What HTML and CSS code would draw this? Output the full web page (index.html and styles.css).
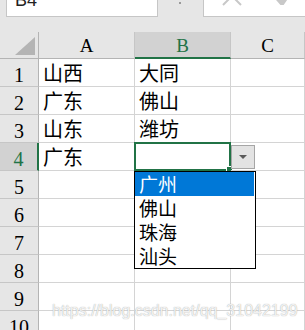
FILE: index.html
```html
<!DOCTYPE html>
<html lang="zh-CN">
  <head>
    <meta charset="UTF-8" />
    <meta name="viewport" content="width=device-width, initial-scale=1.0" />
    <title>Excel 下拉列表</title>
    <link rel="stylesheet" href="styles.css">
  </head>
  <body>
    <div class="app">
      <div class="formula-bar">
        <div class="name-box">B4</div>
        <span class="dots"></span>
        <div class="fx-box">
          <svg class="icon-x" width="20" height="20" viewBox="0 0 20 20">
            <path d="M1 1 L19 19 M19 1 L1 19" stroke="#c8c8c8" stroke-width="2" fill="none" />
          </svg>
          <svg class="icon-ok" width="20" height="20" viewBox="0 0 20 20">
            <path d="M1 10 L8 18 L19 2" stroke="#c8c8c8" stroke-width="5" fill="none" />
          </svg>
        </div>
      </div>

      <div class="sheet">
        <div class="corner"><span class="corner-tri"></span></div>
        <div class="col-head">A</div>
        <div class="col-head selected">B</div>
        <div class="col-head">C</div>

        <div class="row-head">1</div>
        <div class="cell">山西</div>
        <div class="cell">大同</div>
        <div class="cell"></div>

        <div class="row-head">2</div>
        <div class="cell">广东</div>
        <div class="cell">佛山</div>
        <div class="cell"></div>

        <div class="row-head">3</div>
        <div class="cell">山东</div>
        <div class="cell">潍坊</div>
        <div class="cell"></div>

        <div class="row-head selected">4</div>
        <div class="cell">广东</div>
        <div class="cell active"><span class="fill-handle"></span></div>
        <div class="cell"></div>

        <div class="row-head">5</div>
        <div class="cell"></div>
        <div class="cell"></div>
        <div class="cell"></div>

        <div class="row-head">6</div>
        <div class="cell"></div>
        <div class="cell"></div>
        <div class="cell"></div>

        <div class="row-head">7</div>
        <div class="cell"></div>
        <div class="cell"></div>
        <div class="cell"></div>

        <div class="row-head">8</div>
        <div class="cell"></div>
        <div class="cell"></div>
        <div class="cell"></div>

        <div class="row-head">9</div>
        <div class="cell"></div>
        <div class="cell"></div>
        <div class="cell"></div>

        <div class="row-head">10</div>
        <div class="cell"></div>
        <div class="cell"></div>
        <div class="cell"></div>
      </div>

      <!-- validation dropdown over cell B4 -->
      <div class="drop-btn"><span class="drop-arrow"></span></div>
      <ul class="drop-list">
        <li class="hover">广州</li>
        <li>佛山</li>
        <li>珠海</li>
        <li>汕头</li>
      </ul>

      <div class="watermark">https://blog.csdn.net/qq_31042199</div>
    </div>
  </body>
</html>
```

FILE: styles.css
```css
body {
  margin: 0;
  background-color: #fff;
  font-family: "Noto Sans CJK SC", "Liberation Sans", sans-serif;
  overflow: hidden;
}

.app {
  position: relative;
  width: 305px;
  height: 330px;
  overflow: hidden;
}

/* formula bar, cut off at the top */
.formula-bar {
  height: 32px;
  background-color: #e6e6e6;
  display: flex;
  align-items: flex-start;
}

.name-box {
  box-sizing: border-box;
  width: 152px;
  height: 31px;
  margin-top: -14px;
  margin-left: 6px;
  padding: 4px 0 0 8px;
  background-color: #fff;
  border: 1px solid #c6c6c6;
  font-family: "Liberation Sans", sans-serif;
  font-size: 18px;
  line-height: 18px;
  color: #222;
}

.dots {
  width: 2px;
  height: 2px;
  margin: 2px 0 0 21px;
  background-color: #9a9a9a;
}

.fx-box {
  position: relative;
  box-sizing: border-box;
  flex: 1;
  height: 31px;
  margin-top: -14px;
  margin-left: 22px;
  margin-right: -4px;
  background-color: #fff;
  border: 1px solid #c6c6c6;
}

.icon-x {
  position: absolute;
  left: 18px;
  top: -1px;
}

.icon-ok {
  position: absolute;
  left: 70px;
  top: -2px;
}

/* grid */
.sheet {
  display: grid;
  grid-template-columns: 39px 96px 96px 1fr;
  grid-template-rows: 27px;
  grid-auto-rows: 28px;
}

.corner,
.col-head,
.row-head,
.cell {
  box-sizing: border-box;
  border-right: 1px solid #d4d4d4;
  border-bottom: 1px solid #d4d4d4;
}

.corner {
  position: relative;
  background-color: #e6e6e6;
  border-right-color: #b4b4b4;
  border-bottom-color: #b4b4b4;
}

.corner-tri {
  position: absolute;
  right: 3px;
  bottom: 3px;
  width: 0;
  height: 0;
  border-left: 20px solid transparent;
  border-bottom: 18px solid #b4b4b4;
}

.col-head {
  background-color: #e6e6e6;
  border-right-color: #c6c6c6;
  border-bottom-color: #b4b4b4;
  font-family: "Liberation Serif", serif;
  font-size: 19px;
  line-height: 27px;
  text-align: center;
  color: #000;
}

.col-head.selected {
  background-color: #d2d2d2;
  border-bottom: 2px solid #217346;
  color: #217346;
}

.row-head {
  background-color: #e6e6e6;
  border-right-color: #b4b4b4;
  border-bottom-color: #c6c6c6;
  font-family: "Liberation Serif", serif;
  font-size: 20px;
  line-height: 28px;
  padding-top: 2px;
  text-align: center;
  color: #000;
}

.row-head.selected {
  background-color: #d2d2d2;
  border-right: 2px solid #217346;
  color: #217346;
}

.cell {
  position: relative;
  padding-left: 4px;
  font-size: 20px;
  line-height: 28px;
  color: #000;
  white-space: nowrap;
}

.cell.active {
  border: 2px solid #217346;
  margin: -1px 0 0 -1px;
}

.fill-handle {
  position: absolute;
  right: -4px;
  bottom: -4px;
  width: 5px;
  height: 5px;
  background-color: #217346;
  border: 1px solid #fff;
}

/* data validation dropdown */
.drop-btn {
  position: absolute;
  left: 231px;
  top: 145px;
  box-sizing: border-box;
  width: 24px;
  height: 24px;
  background-color: #e3e3e3;
  border: 1px solid #a6a6a6;
  display: flex;
  justify-content: center;
  align-items: center;
}

.drop-arrow {
  width: 0;
  height: 0;
  border-left: 4px solid transparent;
  border-right: 4px solid transparent;
  border-top: 4px solid #5a5a5a;
}

.drop-list {
  position: absolute;
  left: 134px;
  top: 171px;
  box-sizing: border-box;
  width: 122px;
  margin: 0;
  padding: 0;
  list-style: none;
  background-color: #fff;
  border: 1px solid #000;
}

.drop-list li {
  height: 24px;
  margin-right: 1px;
  padding-left: 4px;
  font-size: 19px;
  line-height: 24px;
  color: #000;
}

.drop-list li.hover {
  background-color: #0078d7;
  color: #fff;
}

.watermark {
  position: absolute;
  left: 52px;
  top: 302px;
  font-family: "Liberation Sans", sans-serif;
  font-size: 16px;
  color: rgba(255, 255, 255, 0.85);
  text-shadow: 0 0 1px #9a9a9a;
  white-space: nowrap;
}
```
